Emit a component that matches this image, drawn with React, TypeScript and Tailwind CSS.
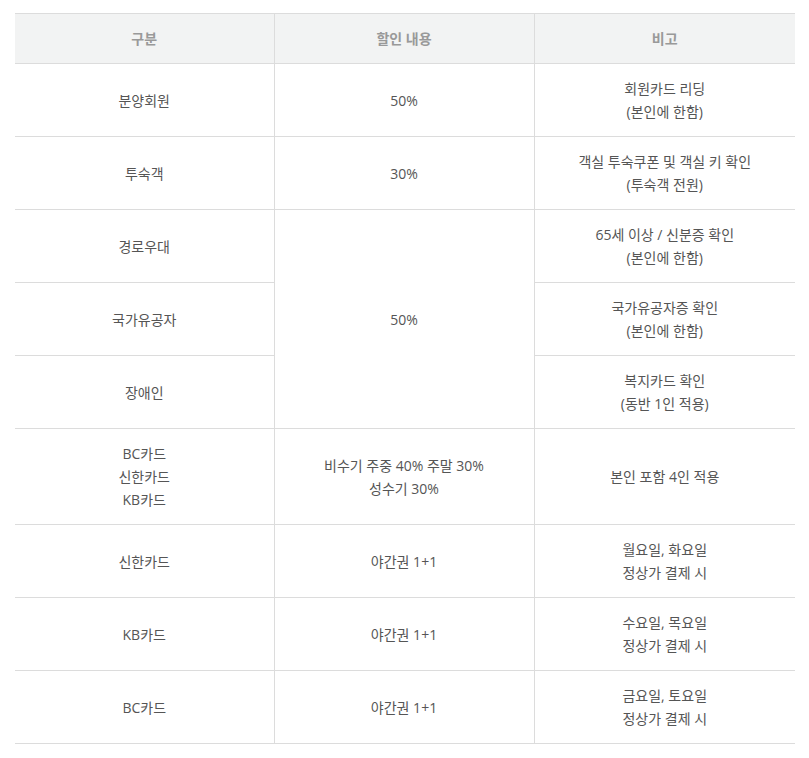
import React from 'react';

type Row = {
  type: string[];
  discount?: string[];
  span?: number;
  note: string[];
};

const rows: Row[] = [
  { type: ['분양회원'], discount: ['50%'], note: ['회원카드 리딩', '(본인에 한함)'] },
  { type: ['투숙객'], discount: ['30%'], note: ['객실 투숙쿠폰 및 객실 키 확인', '(투숙객 전원)'] },
  { type: ['경로우대'], discount: ['50%'], span: 3, note: ['65세 이상 / 신분증 확인', '(본인에 한함)'] },
  { type: ['국가유공자'], note: ['국가유공자증 확인', '(본인에 한함)'] },
  { type: ['장애인'], note: ['복지카드 확인', '(동반 1인 적용)'] },
  {
    type: ['BC카드', '신한카드', 'KB카드'],
    discount: ['비수기 주중 40% 주말 30%', '성수기 30%'],
    note: ['본인 포함 4인 적용'],
  },
  { type: ['신한카드'], discount: ['야간권 1+1'], note: ['월요일, 화요일', '정상가 결제 시'] },
  { type: ['KB카드'], discount: ['야간권 1+1'], note: ['수요일, 목요일', '정상가 결제 시'] },
  { type: ['BC카드'], discount: ['야간권 1+1'], note: ['금요일, 토요일', '정상가 결제 시'] },
];

const Lines = ({ lines }: { lines: string[] }) => (
  <>
    {lines.map((l, i) => (
      <div key={i}>{l}</div>
    ))}
  </>
);

const App: React.FC = () => {
  return (
    <div
      className="min-h-screen bg-white pt-[13px] px-[15px] text-[14px] leading-[23px] text-[#555]"
      style={{ fontFamily: '"Open Sans", "Noto Sans CJK KR", sans-serif' }}
    >
      <table className="w-[780px] table-fixed border-collapse text-center">
        <thead>
          <tr className="bg-[#f2f3f3] border-t border-b border-[#dcdcdc]">
            <th className="w-[259px] py-[13px] font-bold text-[#999] border-r border-[#dcdcdc]">구분</th>
            <th className="w-[260px] py-[13px] font-bold text-[#999] border-r border-[#dcdcdc]">할인 내용</th>
            <th className="py-[13px] font-bold text-[#999]">비고</th>
          </tr>
        </thead>
        <tbody>
          {rows.map((r, i) => (
            <tr key={i} className="border-b border-[#dcdcdc]">
              <td className="py-[13px] align-middle border-r border-[#dcdcdc]">
                <Lines lines={r.type} />
              </td>
              {r.discount && (
                <td rowSpan={r.span ?? 1} className="py-[13px] align-middle border-r border-b border-[#dcdcdc]">
                  <Lines lines={r.discount} />
                </td>
              )}
              <td className="py-[13px] align-middle">
                <Lines lines={r.note} />
              </td>
            </tr>
          ))}
        </tbody>
      </table>
    </div>
  );
};

export default App;
